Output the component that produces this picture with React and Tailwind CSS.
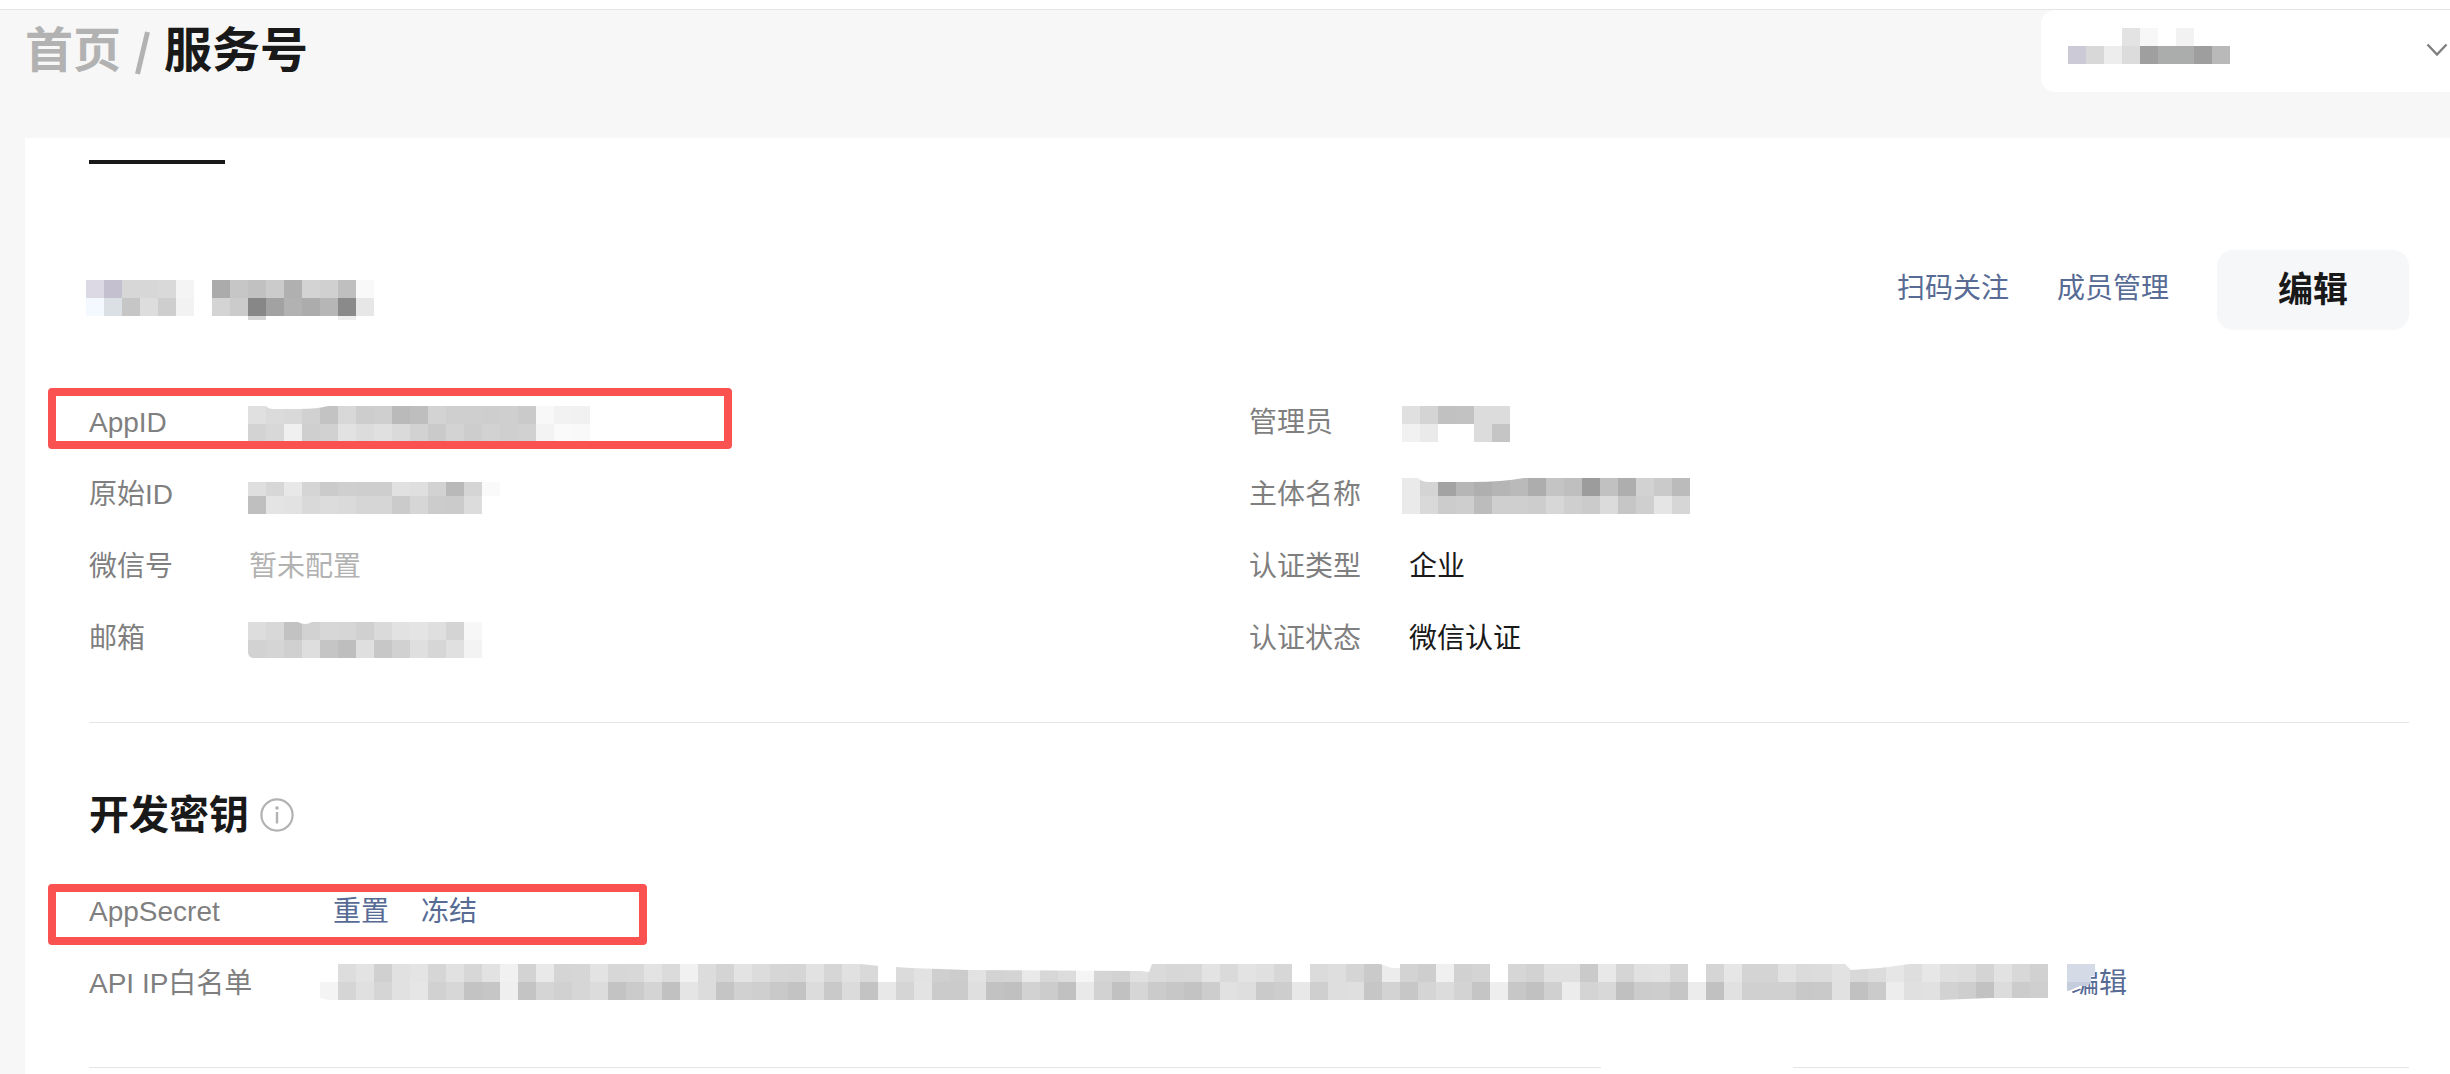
import React from 'react';

// Each row is a list of cells: two digits for a grey, six for a colour, ".." for an empty cell
const CELL = 18;

const masks = {
  name: [
    'dcd9e5 c4c0cf d7 d7 d9 f4 .. ab c6 c1 cb b0 d3 d0 bf f9',
    'f3f9fe dae0e4 c6 dd ce f2 .. d4 cb 87 a2 b2 ac b6 8a e7',
    '.. .. .. .. .. .. .. .. .. d4 .. .. .. .. ee ..',
  ],
  account: [
    '.. .. .. e3 f7 .. f2 .. ..',
    'cbcad6 d8 ed dc 9f abadac abadac 9e b9',
  ],
  appId: [
    'e0 db d9 d1 c3 d8 cd cf ba be d3 cf cf ce cf ca f8 f2 f1',
    'd3 d8 f0 cf d1 e2 dc e0 da d2 ca d3 cd d2 cf d1 f3 fa f9',
  ],
  originalId: [
    'df d7 e8 d5 cb cf ce ce e1 df d2 b9 d5 fa',
    'bf e4 e2 d9 dc da d6 d6 cb d6 cc cb dc ..',
  ],
  email: [
    'dd d8 c2 d2 d7 d6 d0 da e2 e4 df d4 f7',
    'd2 d5 d0 de c5 be df c7 d1 df d6 e0 f3',
  ],
  admin: ['e0 d4 c1 c2 dc dc', 'f1 ea .. .. dc c5'],
  company: [
    'ea d4 a3 b6 af b5 ba ad c4 bf 9c c1 ae d2 ca bb',
    'ea d9 cc ce bc cf cf cd d7 cf cb db c6 cf e5 d6',
  ],
  whitelist: [
    '.. dd e3 d0 e1 e4 d6 e1 d7 e2 f1 d3 e9 d5 d6 e3 d7 d8 e3 db f1 dc d4 e3 dc d6 d5 e2 d6 e1 d9 .. db e2 cf cc e2 d3 d4 e9 d7 dc f5 d5 d2 e0 da d7 d8 e3 da e3 e0 d7 .. db de d5 ca ec d3 ce f0 d1 d4 .. d6 d2 e0 e0 ca e8 d5 e1 e2 d5 .. d5 e6 d4 d4 e2 db dc e2 d8 dc e6 de e7 df dd d4 e2 d8 d1',
    'f4 d5 e0 d5 e1 e6 d1 d7 c3 c6 ef c4 d5 d1 d6 dc c3 cb d4 c1 e5 dc c5 d1 cf c9 c3 dc c9 db c3 e8 d5 e3 cb cb df c2 c0 d2 cc c1 e9 d2 c1 d6 cb c7 c3 cd e1 de ca cd e8 cf de df c6 d3 c7 d5 dc d3 c5 ee c7 c1 d0 ec d4 d8 c0 cc cd c6 ec c1 e1 d0 d0 d0 c8 c9 e1 c1 cb ed e0 e1 d2 ce c2 dc cc cf',
  ],
};

function Mosaic({ rows, cut, className = '' }) {
  const cells = rows.map((row) => row.split(' '));
  const width = cells[0].length * CELL;
  const height = cells.length * CELL;

  return (
    <svg
      width={width}
      height={height}
      viewBox={`0 0 ${width} ${height}`}
      shapeRendering="crispEdges"
      className={`shrink-0 ${className}`}
      aria-hidden="true"
    >
      {cells.map((row, y) =>
        row.map((c, x) =>
          c === '..' ? null : (
            <rect key={`${x}-${y}`} x={x * CELL} y={y * CELL} width={CELL} height={CELL} fill={`#${c.length === 2 ? c + c + c : c}`} />
          )
        )
      )}
      {cut && <path d={cut} fill="#fff" shapeRendering="auto" />}
    </svg>
  );
}

function Row({ label, wide, children }) {
  return (
    <div className="relative flex h-[72px] items-center">
      <dt className={`shrink-0 pb-0.5 text-[#7f7f7f] ${wide ? 'w-[244px]' : 'w-[160px]'}`}>{label}</dt>
      <dd className="flex items-center">{children}</dd>
    </div>
  );
}

function Highlight({ className }) {
  return <span className={`pointer-events-none absolute -left-[41px] h-[61px] rounded-[4px] border-8 border-[#fa5151] ${className}`} />;
}

function App() {
  return (
    <div className="min-h-screen overflow-hidden bg-[#f7f7f7] font-['Liberation_Sans','Noto_Sans_CJK_SC',sans-serif] text-[28px] leading-[40px] text-[#191919]">
      <div className="h-[10px] border-b border-[#e5e5e5] bg-white" />

      <header className="flex h-32 items-start justify-between pl-[25px]">
        <nav className="flex h-[82px] items-center text-[48px] leading-[64px] font-bold">
          <a href="#home" className="text-[#b2b2b2]">首页</a>
          <svg width="15" height="44" viewBox="0 0 15 44" className="mx-[14px] mt-1" aria-hidden="true">
            <path d="M12.5 1L2.5 43" stroke="#b2b2b2" strokeWidth="5" />
          </svg>
          <h1>服务号</h1>
        </nav>
        <div className="relative w-[409px]">
          <select aria-label="账号" className="block h-[82px] w-full appearance-none rounded-l-[14px] bg-white">
            <option value="" />
          </select>
          <Mosaic rows={masks.account} className="pointer-events-none absolute top-[18px] left-[27px]" />
          <svg width="22" height="14" viewBox="0 0 22 14" className="pointer-events-none absolute top-[33px] right-[2px]" fill="none" aria-hidden="true">
            <path d="M1.5 1.5L11 11.5L20.5 1.5" stroke="#7f7f7f" strokeWidth="2.4" />
          </svg>
        </div>
      </header>

      <main className="ml-[25px] min-h-[936px] bg-white pt-[22px] pr-[41px] pl-16">
        <div className="h-1 w-[136px] bg-[#191919]" />

        <section className="mt-[86px] flex h-20 items-center justify-between">
          <Mosaic rows={masks.name} cut="M0 40H288V54H0Z" className="mt-[34px] -ml-[3px]" />
          <div className="flex items-center">
            <a href="#follow" className="mr-12 pb-0.5 text-[#576b95]">扫码关注</a>
            <a href="#members" className="mr-12 pb-0.5 text-[#576b95]">成员管理</a>
            <button type="button" className="h-20 w-48 rounded-[16px] bg-[#f6f7f9] text-[35px] font-bold">编辑</button>
          </div>
        </section>

        <section className="mt-[58px] grid grid-cols-2 border-b border-[#e5e5e5] pb-[46px]">
          <dl>
            <Row label="AppID">
              <Mosaic rows={masks.appId} cut="M18 0H80Q70 3 50 3H26Q20 3 18 0Z" className="-ml-px" />
              <Highlight className="top-0 w-[684px]" />
            </Row>
            <Row label="原始ID">
              <Mosaic rows={masks.originalId} cut="M0 0H252V4H0Z" className="-ml-px" />
            </Row>
            <Row label="微信号">
              <span className="pb-0.5 text-[#b2b2b2]">暂未配置</span>
            </Row>
            <Row label="邮箱">
              <Mosaic rows={masks.email} cut="M50 0H64Q57 4 50 0ZM0 31Q1 36 6 36H0Z" className="-ml-px" />
            </Row>
          </dl>
          <dl>
            <Row label="管理员">
              <Mosaic rows={masks.admin} className="-ml-[7px]" />
            </Row>
            <Row label="主体名称">
              <Mosaic rows={masks.company} cut="M16 0H122Q100 4 70 4H26Q20 4 16 0Z" className="-ml-[7px]" />
            </Row>
            <Row label="认证类型">
              <span className="pb-0.5">企业</span>
            </Row>
            <Row label="认证状态">
              <span className="pb-0.5">微信认证</span>
            </Row>
          </dl>
        </section>

        <section className="pt-16">
          <div className="flex h-14 items-center gap-[11px]">
            <h2 className="text-[40px] leading-[56px] font-bold">开发密钥</h2>
            <button type="button" aria-label="说明">
              <svg width="34" height="34" viewBox="0 0 34 34" fill="none" className="block" aria-hidden="true">
                <circle cx="17" cy="17" r="15.6" stroke="#b2b2b2" strokeWidth="2.2" />
                <circle cx="17" cy="10" r="1.8" fill="#b2b2b2" />
                <path d="M17 14V25.5" stroke="#b2b2b2" strokeWidth="2.4" />
              </svg>
            </button>
          </div>
          <dl className="mt-[34px]">
            <Row label="AppSecret" wide>
              <button type="button" className="mr-8 pb-0.5 text-[#576b95]">重置</button>
              <button type="button" className="pb-0.5 text-[#576b95]">冻结</button>
              <Highlight className="top-[7px] w-[599px]" />
            </Row>
            <Row label="API IP白名单" wide>
              <Mosaic
                rows={masks.whitelist}
                cut="M540 0L560 2L591 4L648 6L820 7L829 8L832 0ZM1060 0L1072 4H1080V0ZM1525 0L1531 6L1560 4L1590 0ZM1620 36L1670 34H1728V36ZM0 34L8 36H0Z"
                className="mb-1.5 -ml-[13px]"
              />
              <button type="button" className="relative ml-[23px] pb-0.5 text-[#576b95]">
                编辑
                <svg width="28" height="28" viewBox="0 0 28 28" className="absolute top-0 -left-1" aria-hidden="true">
                  <path d="M0 0H28V12H24V18L20 22H12L4 26L0 27Z" fill="#d5dbe6" />
                  <path d="M0 18H24L20 22H12L4 26L0 27Z" fill="#c5cddc" />
                </svg>
              </button>
            </Row>
          </dl>
        </section>

        <div className="mt-[46px] flex">
          <span className="h-px flex-[1512] bg-[#e5e5e5]" />
          <span className="h-px flex-[192]" />
          <span className="h-px flex-[616] bg-[#e5e5e5]" />
        </div>
      </main>
    </div>
  );
}

export default App;
